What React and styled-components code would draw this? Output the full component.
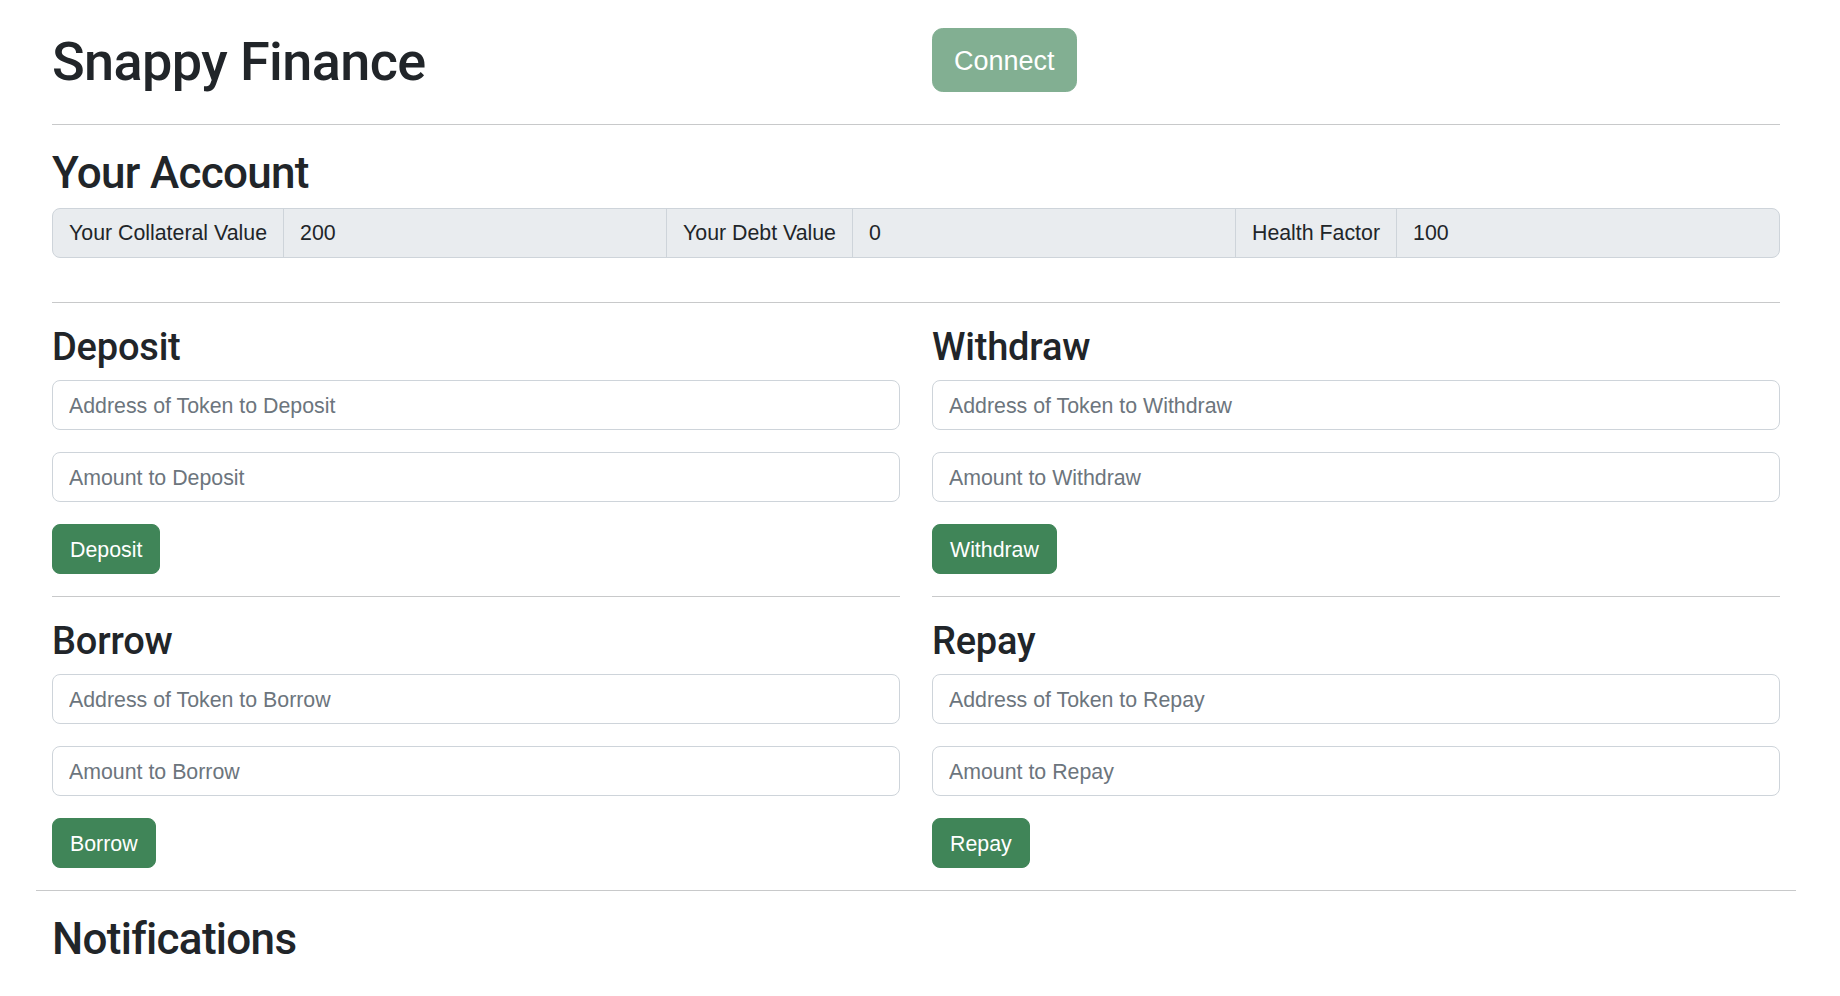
import React from "react";
import styled, { createGlobalStyle } from "styled-components";

const GlobalStyle = createGlobalStyle`
  * {
    box-sizing: border-box;
  }

  body {
    margin: 0;
    background: #fff;
    color: #212529;
    font-family: "Liberation Sans", Arial, sans-serif;
    font-size: 21.33px;
    line-height: 1.5;
  }
`;

const account = [
    { label: "Your Collateral Value", value: "200" },
    { label: "Your Debt Value", value: "0" },
    { label: "Health Factor", value: "100" },
];

const actionRows = [
    [
        { name: "Deposit", address: "Address of Token to Deposit", amount: "Amount to Deposit" },
        { name: "Withdraw", address: "Address of Token to Withdraw", amount: "Amount to Withdraw" },
    ],
    [
        { name: "Borrow", address: "Address of Token to Borrow", amount: "Amount to Borrow" },
        { name: "Repay", address: "Address of Token to Repay", amount: "Amount to Repay" },
    ],
];

const App = () => {
    return (
        <Page>
            <GlobalStyle />
            <Container top>
                <Header>
                    <Title>Snappy Finance</Title>
                    <div>
                        <ConnectButton disabled>Connect</ConnectButton>
                    </div>
                </Header>
                <Divider />
                <SectionTitle>Your Account</SectionTitle>
                <InfoBar>
                    {account.map((item) => (
                        <React.Fragment key={item.label}>
                            <InfoLabel>{item.label}</InfoLabel>
                            <InfoValue>{item.value}</InfoValue>
                        </React.Fragment>
                    ))}
                </InfoBar>
                <Divider />
                {actionRows.map((row, i) => (
                    <ActionGrid key={i}>
                        {row.map((action) => (
                            <ActionColumn key={action.name}>
                                <ActionTitle>{action.name}</ActionTitle>
                                <Field placeholder={action.address} />
                                <Field placeholder={action.amount} />
                                <ActionButton>{action.name}</ActionButton>
                                {i < actionRows.length - 1 && <Divider />}
                            </ActionColumn>
                        ))}
                    </ActionGrid>
                ))}
            </Container>
            <Divider />
            <Container>
                <SectionTitle>Notifications</SectionTitle>
            </Container>
        </Page>
    );
};

const Page = styled.div`
    width: 1760px;
    margin-left: 36px;
    padding-bottom: 30px;
`;

const Container = styled.div`
    padding: ${(props) => (props.top ? "28px 16px 0" : "0 16px")};
`;

const Header = styled.div`
    display: grid;
    grid-template-columns: 1fr 1fr;
    column-gap: 32px;
    align-items: start;
    padding-bottom: 6px;
`;

const Title = styled.h1`
    margin: 0;
    font-family: Roboto, "Liberation Sans", sans-serif;
    font-weight: 500;
    font-size: 54px;
    line-height: 68px;
    letter-spacing: -0.6px;
    color: #212529;
`;

const ConnectButton = styled.button`
    height: 64px;
    padding: 2px 21px 0;
    border: 1px solid #408558;
    border-radius: 10.67px;
    background: #408558;
    color: #fff;
    font-family: "Liberation Sans", Arial, sans-serif;
    font-size: 27px;
    opacity: 0.65;
`;

const Divider = styled.hr`
    margin: 22px 0;
    border: 0;
    border-top: 1px solid #c8c9ca;
`;

const SectionTitle = styled.h2`
    margin: 0 0 9px;
    font-family: Roboto, "Liberation Sans", sans-serif;
    font-weight: 500;
    font-size: 44px;
    line-height: 52px;
    letter-spacing: -0.7px;
    color: #212529;
`;

/* padding below instead of margin: a margin would collapse with the hr's */
const InfoBarWrap = styled.div`
    padding-bottom: 22px;
`;

const InfoBarBox = styled.div`
    display: flex;
    height: 50px;
    border: 1px solid #ced4da;
    border-radius: 8px;
    background: #e9ecef;
    overflow: hidden;
`;

const InfoBar = ({ children }) => (
    <InfoBarWrap>
        <InfoBarBox>{children}</InfoBarBox>
    </InfoBarWrap>
);

const InfoCell = styled.div`
    display: flex;
    align-items: center;
    padding: 2px 16px 0;
    white-space: nowrap;
    color: #212529;
    border-left: 1px solid #ced4da;

    &:first-child {
        border-left: 0;
    }
`;

const InfoLabel = styled(InfoCell)`
    flex: 0 0 auto;
`;

const InfoValue = styled(InfoCell)`
    flex: 1 1 0;
`;

const ActionGrid = styled.div`
    display: grid;
    grid-template-columns: 1fr 1fr;
    column-gap: 32px;
`;

const ActionColumn = styled.div`
    display: flex;
    flex-direction: column;
    align-items: flex-start;

    hr {
        align-self: stretch;
    }
`;

const ActionTitle = styled.h3`
    margin: 0 0 11px;
    font-family: Roboto, "Liberation Sans", sans-serif;
    font-weight: 500;
    font-size: 38px;
    line-height: 44px;
    letter-spacing: -0.2px;
    color: #212529;
`;

const Field = styled.input`
    width: 100%;
    height: 50px;
    margin-bottom: 22px;
    padding: 2px 16px 0;
    border: 1px solid #ced4da;
    border-radius: 8px;
    background: #fff;
    color: #212529;
    font-family: "Liberation Sans", Arial, sans-serif;
    font-size: 21.33px;
    outline: none;

    &::placeholder {
        color: #6c757d;
    }
`;

const ActionButton = styled.button`
    height: 50px;
    padding: 2px 17px 0;
    border: 1px solid #408558;
    border-radius: 8px;
    background: #408558;
    color: #fff;
    font-family: "Liberation Sans", Arial, sans-serif;
    font-size: 21.33px;
    cursor: pointer;
`;

export default App;
